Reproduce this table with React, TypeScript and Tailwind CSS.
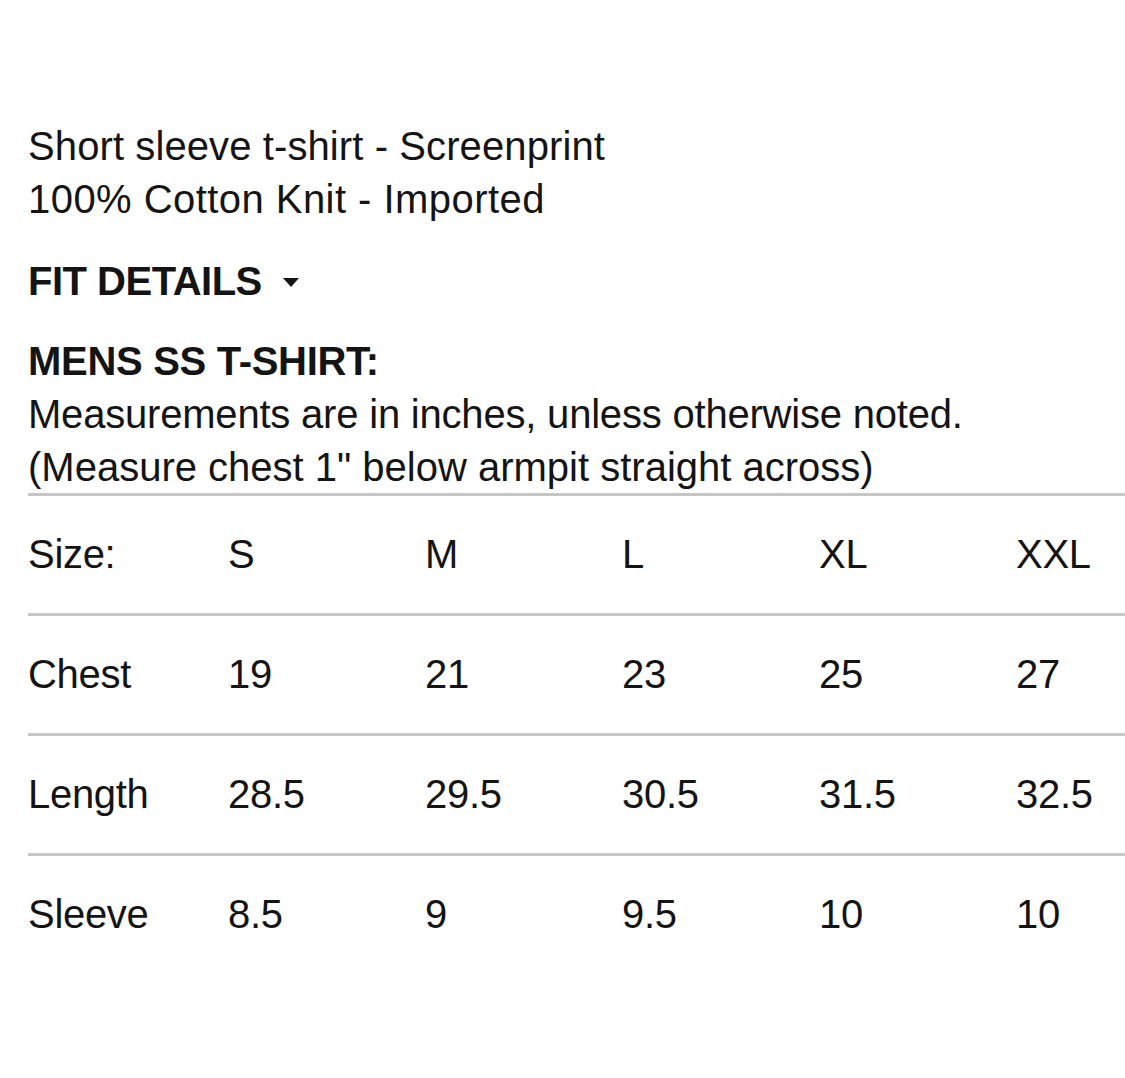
import React from "react";

const rows: { label: string; values: string[] }[] = [
  { label: "Size:", values: ["S", "M", "L", "XL", "XXL"] },
  { label: "Chest", values: ["19", "21", "23", "25", "27"] },
  { label: "Length", values: ["28.5", "29.5", "30.5", "31.5", "32.5"] },
  { label: "Sleeve", values: ["8.5", "9", "9.5", "10", "10"] },
];

export default function App() {
  return (
    <div
      className="w-[1125px] h-[1078px] bg-white text-[#141414] overflow-hidden"
      style={{ fontFamily: '"Liberation Sans", Arial, Helvetica, sans-serif' }}
    >
      <div className="pl-[28px] pt-[120px] text-[40px] leading-[53px]">
        <p className="tracking-[0.1px]">Short sleeve t-shirt - Screenprint</p>
        <p className="tracking-[0.45px]">100% Cotton Knit - Imported</p>

        <div className="mt-[29px] flex items-center font-bold tracking-[-0.5px]">
          <span>FIT DETAILS</span>
          <svg width="16" height="9" viewBox="0 0 16 9" className="ml-[21px] mt-[2px]">
            <polygon points="0,0 16,0 8,9" fill="#141414" />
          </svg>
        </div>

        <p className="mt-[27px] font-bold tracking-[-0.3px]">MENS SS T-SHIRT:</p>
        <p className="tracking-[-0.2px]">Measurements are in inches, unless otherwise noted.</p>
        <p>(Measure chest 1" below armpit straight across)</p>

        <div className="-mt-[1px]">
          {rows.map((row) => (
            <div key={row.label}>
              <div className="h-[3px] bg-[#c6c6c6]" />
              <div className="grid grid-cols-[200px_197px_197px_197px_197px_1fr] h-[117px] items-center tracking-[-0.3px]">
                <span>{row.label}</span>
                {row.values.map((v, j) => (
                  <span key={j}>{v}</span>
                ))}
              </div>
            </div>
          ))}
        </div>
      </div>
    </div>
  );
}
